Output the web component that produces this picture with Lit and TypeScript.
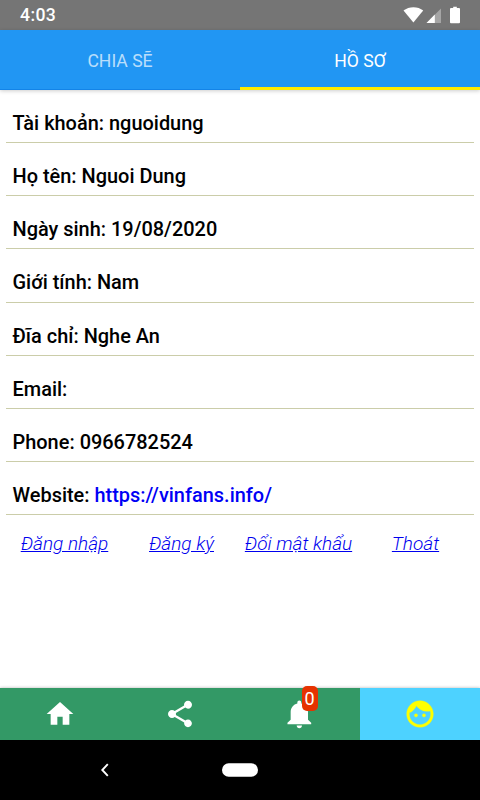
import { LitElement, html, css, svg } from "lit";
import { customElement } from "lit/decorators.js";

const ROWS: [string, string][] = [
  ["Tài khoản:", "nguoidung"],
  ["Họ tên:", "Nguoi Dung"],
  ["Ngày sinh:", "19/08/2020"],
  ["Giới tính:", "Nam"],
  ["Đĩa chỉ:", "Nghe An"],
  ["Email:", ""],
  ["Phone:", "0966782524"],
];
const HOME = "M10 20v-6h4v6h5v-8h3L12 3 2 12h3v8z";
const SHARE =
  "M18 16.08c-.76 0-1.44.3-1.96.77L8.91 12.7c.05-.23.09-.46.09-.7s-.04-.47-.09-.7l7.05-4.11c.54.5 1.25.81 2.04.81 1.66 0 3-1.34 3-3s-1.34-3-3-3-3 1.34-3 3c0 .24.04.47.09.7L8.04 9.81C7.5 9.31 6.79 9 6 9c-1.66 0-3 1.34-3 3s1.34 3 3 3c.79 0 1.5-.31 2.04-.81l7.12 4.16c-.05.21-.08.43-.08.65 0 1.61 1.31 2.92 2.92 2.92s2.92-1.31 2.92-2.92-1.31-2.92-2.92-2.92z";
const BELL =
  "M11.5 22.6c1.1 0 2-.9 2-2h-4c0 1.1.9 2 2 2zm6.5-6.2v-5.9c0-3.07-2.13-5.64-5-6.32V3.3c0-.83-.67-1.5-1.5-1.5S10 2.47 10 3.3v.88c-2.87.68-5 3.25-5 6.32v5.9l-2.4 2.2v1h17.8v-1l-2.4-2.2z";
const FACE =
  "M9 11.75c-.69 0-1.25.56-1.25 1.25s.56 1.25 1.25 1.25 1.25-.56 1.25-1.25-.56-1.25-1.25-1.25zm6 0c-.69 0-1.25.56-1.25 1.25s.56 1.25 1.25 1.25 1.25-.56 1.25-1.25-.56-1.25-1.25-1.25zM12 2C6.48 2 2 6.48 2 12s4.48 10 10 10 10-4.48 10-10S17.52 2 12 2zm0 18c-4.41 0-8-3.59-8-8 0-.29.02-.58.05-.86 2.36-1.05 4.23-2.98 5.21-5.37C11.07 8.33 14.05 10 17.42 10c.78 0 1.53-.09 2.25-.26.21.71.33 1.47.33 2.26 0 4.41-3.59 8-8 8z";

const icon = (d: string) =>
  html`<svg class="icon" viewBox="0 0 24 24">${svg`<path d=${d} />`}</svg>`;

@customElement("app-root")
export class AppRoot extends LitElement {
  static styles = css`
    :host {
      display: flex;
      flex-direction: column;
      width: 480px;
      height: 800px;
      overflow: hidden;
      background: #fff;
      font-family: Roboto, sans-serif;
    }
    * { box-sizing: border-box; }
    .status {
      flex: none;
      height: 30px;
      padding: 0 19px 0 20px;
      background: #757575;
      color: #fff;
      display: flex;
      justify-content: space-between;
      font: 500 17.6px/30px Roboto, sans-serif;
      letter-spacing: 0.4px;
    }
    .signals { width: 58px; height: 30px; fill: #fff; }
    .tabs {
      flex: none;
      display: flex;
      height: 60px;
      background: #2196f3;
      box-shadow: 0 1px 4px rgba(0, 0, 0, 0.2);
    }
    .tab {
      flex: 1;
      border-bottom: 1px solid #1384e8;
      text-align: center;
      font-size: 17.6px;
      line-height: 62px;
      color: rgba(255, 255, 255, 0.7);
      height: 60px;
    }
    .tab.active { color: #fff; border-bottom: 3px solid #ffeb00; }
    .content { flex: 1; padding: 0 6px; }
    .row {
      height: 53.15px;
      padding: 20px 6.5px 0;
      border-bottom: 1px solid #cbcda9;
      font-size: 19.95px;
      font-weight: 500;
      line-height: 26px;
      color: #000;
      white-space: nowrap;
    }
    .row a { color: #0000f5; }
    .links {
      display: grid;
      grid-template-columns: 117px 117px 117px 117px;
      margin-top: 16px;
      font-size: 19px;
      font-weight: 300;
      font-style: italic;
      line-height: 26px;
      text-align: center;
    }
    .links a { color: #0000ee; text-decoration: underline; white-space: nowrap; }
    .bottom {
      flex: none;
      height: 52px;
      display: flex;
      box-shadow: 0 0 3px rgba(0, 0, 0, 0.3);
    }
    .item {
      flex: 1;
      position: relative;
      display: flex;
      align-items: center;
      justify-content: center;
      background: #339966;
      fill: #fff;
    }
    .item.active { background: #4dd2ff; fill: #ff0; }
    .icon { width: 32px; height: 32px; }
    .item.active .icon { stroke: #ff0; stroke-width: 0.25px; }
    .badge {
      position: absolute;
      left: 61.5px;
      top: -2.5px;
      width: 16px;
      height: 25.5px;
      border-radius: 5px;
      background: #e63200;
      color: #fff;
      text-align: center;
      font-size: 18px;
      line-height: 26px;
    }
    .nav { flex: none; height: 60px; width: 480px; background: #000; }
  `;

  render() {
    return html`
      <div class="status">
        <span>4:03</span>
        <svg class="signals" viewBox="403 0 58 30">
          <path d="M403.5 10.5C409 6 418 6 423.2 10.5L413.4 22.6Z" />
          <path d="M441 8.5V23H426.5Z" opacity=".35" />
          <path d="M434.8 14.5V23H426.5Z" />
          <path d="M451 8h2.2V6.8h3.6V8h2.2q1 0 1 1v13.2q0 1-1 1h-8q-1 0-1-1V9q0-1 1-1z" />
        </svg>
      </div>
      <div class="tabs">
        <div class="tab">CHIA SẼ</div>
        <div class="tab active">HỒ SƠ</div>
      </div>
      <div class="content">
        ${ROWS.map(([k, v]) => html`<div class="row">${k} ${v}</div>`)}
        <div class="row">Website: <a>https://vinfans.info/</a></div>
        <div class="links">
          <span><a>Đăng nhập</a></span><span><a>Đăng ký</a></span>
          <span><a>Đổi mật khẩu</a></span><span><a>Thoát</a></span>
        </div>
      </div>
      <div class="bottom">
        <div class="item">${icon(HOME)}</div>
        <div class="item">${icon(SHARE)}</div>
        <div class="item">${icon(BELL)}<span class="badge">0</span></div>
        <div class="item active">${icon(FACE)}</div>
      </div>
      <svg class="nav" viewBox="0 0 480 60">
        <path d="M107.8 24.2L102.3 30L107.8 35.8" fill="none" stroke="#fff" stroke-width="1.9" />
        <rect x="222" y="23.3" width="36" height="13.4" rx="6.7" fill="#fff" />
      </svg>
    `;
  }
}
